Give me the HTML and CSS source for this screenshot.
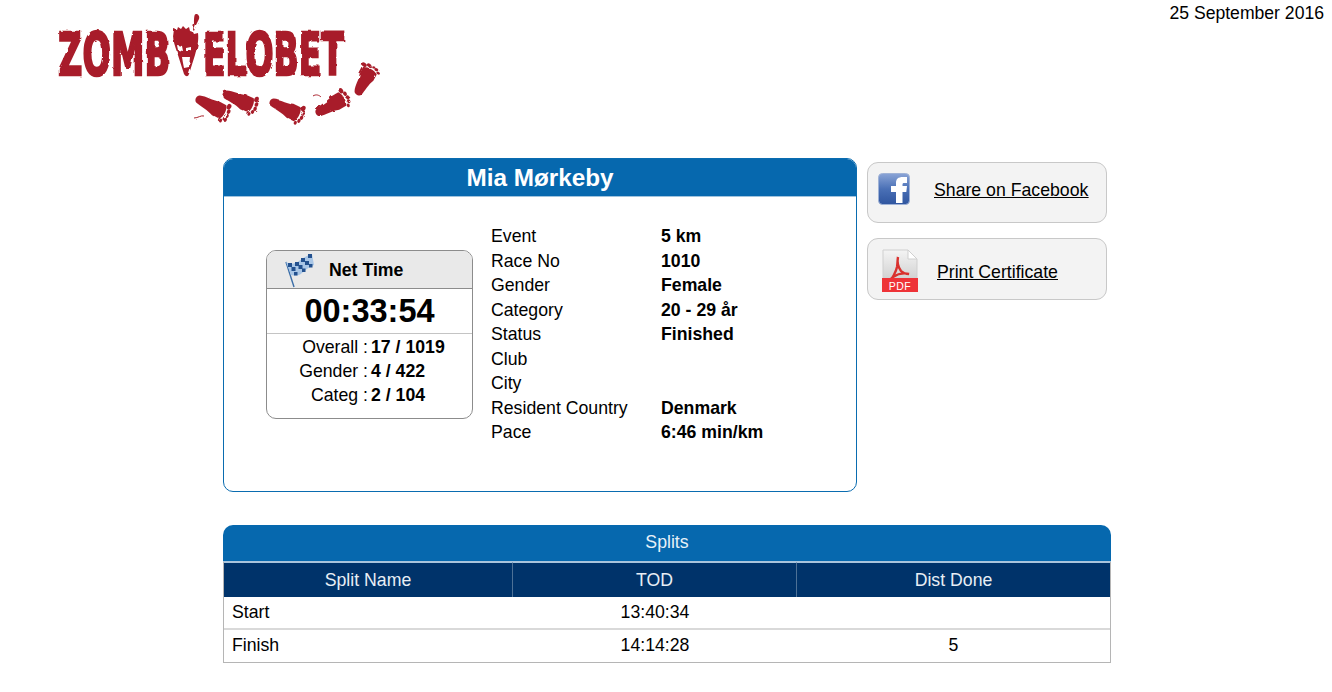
FILE: index.html
```html
<!DOCTYPE html>
<html lang="en">
<head>
<meta charset="utf-8">
<title>Mia Mørkeby</title>
<link rel="stylesheet" href="styles.css">
</head>
<body>
<header class="top">
  <svg class="logo" viewBox="50 10 330 120" width="330" height="120" role="img" aria-label="Zombielobet">
    <defs>
      <filter id="rough" x="-5%" y="-5%" width="110%" height="110%">
        <feTurbulence type="fractalNoise" baseFrequency="0.14" numOctaves="2" seed="4" result="n"/>
        <feDisplacementMap in="SourceGraphic" in2="n" scale="3"/>
        <feGaussianBlur stdDeviation="0.6"/>
      </filter>
      <g id="foot">
        <path d="M0-3C6-5 14-4 20-6L28-6C31-3 31 3 28 6L20 6C14 4 6 4 0 3C-3 2-3-2 0-3z"/>
        <circle cx="31" cy="-6" r="2.200"/><circle cx="33" cy="-2.500" r="1.800"/><circle cx="33.500" cy="1" r="1.700"/><circle cx="32.500" cy="4" r="1.600"/><circle cx="30" cy="6.500" r="1.500"/>
      </g>
    </defs>
    <g class="logo-ink" filter="url(#rough)">
      <text class="logo-text" transform="translate(58 75) scale(.58 1)">ZOMB</text>
      <text class="logo-text" transform="translate(203 75) scale(.57 1)">ELOBET</text>
      <path fill-rule="evenodd" d="M173 37l1-8 3 1 1-3 3 2 2-3 3 3 3-2 1 4 3 1 1 2 4-1c1 8-1 15-3 22l-6 19c-1 3-3 3-5 0l-7-22c-2-6-4-11-4-17zM177 45l1 5 5 1-1-5zM191 47l-5 1 0 4 5-2zM182 57l1 6 1 5 5-1 1-10z"/>
      <path d="M196 14c2 0 4 2 3 5l-3 6-2 6-1-1 1-7c0-4 0-9 2-9z"/>
      <use href="#foot" transform="translate(198 99) rotate(28) scale(1 1.300)"/>
      <use href="#foot" transform="translate(225 94) rotate(24) scale(1 1.300)"/>
      <use href="#foot" transform="translate(272 102) rotate(26) scale(1 1.300)"/>
      <use href="#foot" transform="translate(318 113) rotate(-30) scale(1 1.300)"/>
      <use href="#foot" transform="translate(358 93) rotate(-62) scale(.9 1.300)"/>
      <path class="logo-line" d="M194 118c4 0 7-3 10-2M313 96c3-2 6-1 8 1"/>
    </g>
  </svg>
  <p class="date">25 September 2016</p>
</header>

<main class="page">
  <div class="summary">
    <section class="card">
      <h1 class="card-title">Mia Mørkeby</h1>
      <div class="card-body">
        <div class="net">
          <div class="net-head">
            <svg class="flag" viewBox="0 0 30 36" width="30" height="36" aria-hidden="true">
              <path d="M1 9l8 25" stroke="#3b6ea8" stroke-width="1.400" fill="none"/>
              <path d="M1 9c5 3 9 2 13-1s7-5 13-7l2 11c-5 2-9 5-12 8s-7 3-11 2z" fill="#a9c6e6"/>
              <g fill="#23518f">
                <rect x="3" y="10" width="4" height="4"/><rect x="10" y="9" width="4" height="4"/><rect x="16" y="5" width="4" height="4"/><rect x="23" y="1" width="4" height="4"/>
                <rect x="6.500" y="14" width="4" height="4"/><rect x="13.500" y="12" width="4" height="4"/><rect x="20" y="8" width="4" height="4"/>
                <rect x="9" y="19" width="3.500" height="3.500"/><rect x="17" y="15.500" width="3.500" height="3.500"/><rect x="24" y="11" width="3.500" height="3.500"/>
              </g>
            </svg>
            <span class="net-label">Net Time</span>
          </div>
          <div class="net-time">00:33:54</div>
          <dl class="ranks">
            <dt>Overall :</dt><dd>17 / 1019</dd>
            <dt>Gender :</dt><dd>4 / 422</dd>
            <dt>Categ :</dt><dd>2 / 104</dd>
          </dl>
        </div>
        <dl class="details">
          <dt>Event</dt><dd>5 km</dd>
          <dt>Race No</dt><dd>1010</dd>
          <dt>Gender</dt><dd>Female</dd>
          <dt>Category</dt><dd>20 - 29 år</dd>
          <dt>Status</dt><dd>Finished</dd>
          <dt>Club</dt><dd></dd>
          <dt>City</dt><dd></dd>
          <dt>Resident Country</dt><dd>Denmark</dd>
          <dt>Pace</dt><dd>6:46 min/km</dd>
        </dl>
      </div>
    </section>
    <aside class="actions">
      <a class="action action-fb" href="#">
        <svg class="fb" viewBox="0 0 32 32" width="32" height="32" aria-hidden="true">
          <defs>
            <linearGradient id="fbg" x1="0" y1="0" x2="0" y2="1">
              <stop offset="0" stop-color="#8aa4d6"/><stop offset=".5" stop-color="#4a70b6"/><stop offset="1" stop-color="#2f559f"/>
            </linearGradient>
          </defs>
          <rect x="0.500" y="0.500" width="31" height="31" rx="4" fill="url(#fbg)" stroke="#9fb2d6"/>
          <path d="M18 30V19h-5v-6h5V10c0-4 2-6 7-6h4v6h-3c-1 0-1.500.5-1.500 1.500V13h4.500l-.7 6h-3.800v11z" fill="#fff"/>
        </svg>
        <span>Share on Facebook</span>
      </a>
      <a class="action action-pdf" href="#">
        <svg class="pdf" viewBox="0 0 36 44" width="36" height="44" aria-hidden="true">
          <defs>
            <linearGradient id="pg" x1="0" y1="0" x2="0" y2="1">
              <stop offset="0" stop-color="#f4f4f4"/><stop offset="1" stop-color="#cfcfcf"/>
            </linearGradient>
          </defs>
          <path d="M1 1h25l9 9v22H1z" fill="url(#pg)" stroke="#cfcfcf"/>
          <path d="M26 1l9 9h-9z" fill="#fff" stroke="#cfcfcf"/>
          <path d="M16 8c-1 5 0 10 3 14 2 2 6 3 8 3-4-1-10-1-16 3-3 2-4 5-4 5 3-3 7-10 8-15 .5-3 .5-7 1-10z" fill="none" stroke="#d9312e" stroke-width="2.400"/>
          <rect x="0" y="29" width="36" height="14" fill="#ee3338"/>
          <text class="pdf-text" x="18" y="40.500">PDF</text>
        </svg>
        <span>Print Certificate</span>
      </a>
    </aside>
  </div>

  <section class="splits">
    <h2 class="splits-title">Splits</h2>
    <table class="splits-table">
      <colgroup><col class="c1"><col class="c2"><col class="c3"></colgroup>
      <thead>
        <tr><th>Split Name</th><th>TOD</th><th>Dist Done</th></tr>
      </thead>
      <tbody>
        <tr><td>Start</td><td class="mid">13:40:34</td><td class="mid"></td></tr>
        <tr><td>Finish</td><td class="mid">14:14:28</td><td class="mid">5</td></tr>
      </tbody>
    </table>
  </section>
</main>
</body>
</html>
```

FILE: styles.css
```css
* { box-sizing: border-box; }
html, body { margin: 0; padding: 0; }
body {
  font-family: "Liberation Sans", Arial, sans-serif;
  font-size: 17.7px;
  color: #000;
  background: #fff;
  overflow: hidden;
}
dl, dd, dt, h1, h2, p { margin: 0; }

.top {
  display: flex;
  justify-content: space-between;
  align-items: flex-start;
  height: 158px;
  padding: 10px 8px 0 50px;
}
.logo { display: block; overflow: visible; }
.logo-ink { fill: #a81f2a; }
.logo-line { fill: none; stroke: #a81f2a; stroke-width: 1px; }
.logo-text {
  font-family: "DejaVu Sans", sans-serif;
  font-weight: 700;
  font-size: 58px;
  stroke: #a81f2a;
  stroke-width: 2.5px;
}
.date { margin-top: -7px; line-height: 20px; font-size: 17.6px; }

.page { margin-left: 223px; width: 888px; }
.summary { display: flex; gap: 10px; align-items: flex-start; }

.card {
  width: 634px;
  height: 334px;
  border: 1px solid #0a6cb0;
  border-radius: 10px;
  overflow: hidden;
}
.card-title {
  height: 38px;
  background: #0668ae;
  color: #fff;
  font-size: 24.3px;
  font-weight: 700;
  line-height: 37px;
  text-align: center;
  border-bottom: 1px solid #9fc3de;
}
.card-body { display: flex; padding-left: 42px; }

.net {
  width: 207px;
  height: 169px;
  margin-top: 53px;
  border: 1px solid #8c8c8c;
  border-radius: 10px;
  overflow: hidden;
}
.net-head {
  display: flex;
  align-items: center;
  height: 38px;
  background: #e9e9e9;
  border-bottom: 1px solid #8c8c8c;
  padding-left: 18px;
}
.flag { flex: none; margin-top: 2px; }
.net-label { margin-left: 14px; margin-top: 2px; font-weight: 700; }
.net-time {
  height: 45px;
  font-size: 32.5px;
  font-weight: 700;
  line-height: 44px;
  text-align: center;
  border-bottom: 1px solid #c4c4c4;
}
.ranks {
  display: grid;
  grid-template-columns: 101px 1fr;
  column-gap: 3px;
  grid-auto-rows: 24.2px;
  line-height: 24.2px;
  margin-top: 1px;
}
.ranks dt { text-align: right; }
.ranks dd { font-weight: 700; }

.details {
  display: grid;
  grid-template-columns: 170px 1fr;
  grid-auto-rows: 24.5px;
  line-height: 24.5px;
  margin-left: 18px;
  margin-top: 27px;
  flex: 1;
}
.details dd { font-weight: 700; }

.actions {
  display: flex;
  flex-direction: column;
  gap: 15px;
  padding-top: 4px;
  width: 240px;
}
.action {
  display: flex;
  align-items: center;
  height: 62px;
  background: #f3f3f3;
  border: 1px solid #c8c8c8;
  border-radius: 11px;
  color: #000;
}
.action span { text-decoration: underline; white-space: nowrap; }
.action-fb { height: 61px; padding-left: 10px; }
.action-fb span { margin-left: 24px; margin-top: -4px; }
.fb { flex: none; margin-top: -7px; }
.action-pdf { padding-left: 14px; }
.action-pdf span { margin-left: 19px; margin-top: 6px; }
.pdf { flex: none; margin-top: 4px; }
.pdf-text {
  font-family: "Liberation Sans", Arial, sans-serif;
  font-size: 10.5px;
  fill: #fff;
  text-anchor: middle;
  letter-spacing: .5px;
}

.splits { margin-top: 33px; }
.splits-title {
  height: 37px;
  background: #0668ae;
  color: #e8f1f8;
  font-size: 17.7px;
  font-weight: 400;
  line-height: 35px;
  text-align: center;
  border-radius: 10px 10px 0 0;
  border-bottom: 1px solid #a9c4dc;
}
.splits-table {
  width: 888px;
  table-layout: fixed;
  border-collapse: separate;
  border-spacing: 0;
  border: 1px solid #b5b5b5;
  border-top: 0;
}
.c1 { width: 289px; }
.c2 { width: 284px; }
.splits-table th {
  height: 35px;
  padding: 0;
  background: #00336a;
  color: #e8eef5;
  font-weight: 400;
  border-top: 1px solid #a9c4dc;
  border-right: 1px solid #4d7196;
}
.splits-table th:last-child { border-right: 0; }
.splits-table td {
  height: 33px;
  padding: 0 0 0 8px;
  border-bottom: 2px solid #d9d9d9;
}
.splits-table tr:last-child td { border-bottom: 0; height: 32px; padding-bottom: 2px; }
.splits-table td.mid { text-align: center; padding-left: 0; }
```
